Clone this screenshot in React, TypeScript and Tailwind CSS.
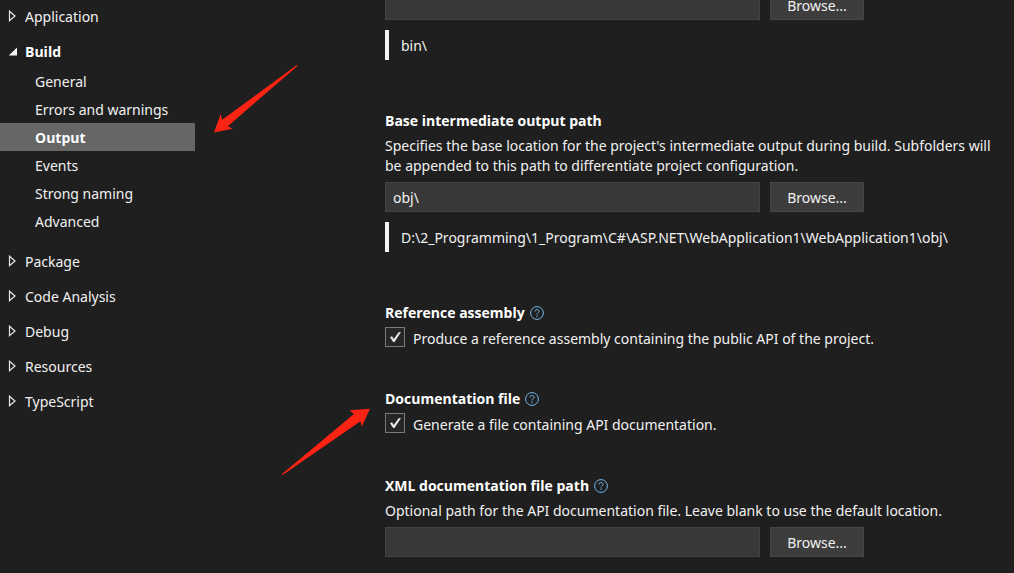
import { useId, useState } from "react";

function Expander({ open }: { open?: boolean }) {
  return (
    <svg viewBox="0 0 9 13" className="h-[13px] w-[9px] shrink-0" aria-hidden="true">
      {open ? (
        <path d="M9 2.5V10.5H0.8Z" fill="#f5f5f5" />
      ) : (
        <path d="M1.5 1.2V10.8L7 6Z" fill="none" stroke="#e8e8e8" strokeWidth="1.2" />
      )}
    </svg>
  );
}

function HelpIcon() {
  return (
    <svg viewBox="0 0 14 14" className="size-[14px] shrink-0" fill="none" stroke="#75b9ee" aria-hidden="true">
      <circle cx="7" cy="7" r="6.4" strokeWidth="1" />
      <path d="M5 5.5C5 4.2 5.8 3.5 7 3.5S9 4.2 9 5.3C9 6.7 7 6.8 7 8.5" strokeWidth="1" />
      <path d="M7 9.5V10.8" strokeWidth="1.2" />
    </svg>
  );
}

function NavGroup({ label, open }: { label: string; open?: boolean }) {
  return (
    <button
      type="button"
      aria-expanded={!!open}
      className={`flex w-full items-center gap-2 pl-2 text-left ${open ? "h-[33px] pt-[2px] font-['Open_Sans',sans-serif] font-bold text-white" : "h-[35px]"}`}
    >
      <Expander open={open} />
      {label}
    </button>
  );
}

function Heading({ children, help }: { children: string; help?: boolean }) {
  return (
    <h2 className="flex h-5 items-center gap-[5px] font-['Open_Sans',sans-serif] font-bold text-white">
      {children}
      {help && (
        <a href="#help" aria-label={`Help: ${children}`}>
          <HelpIcon />
        </a>
      )}
    </h2>
  );
}

function PathField({ label, initial }: { label: string; initial: string }) {
  const [value, setValue] = useState(initial);
  return (
    <div className="flex gap-[10px]">
      <input
        type="text"
        aria-label={label}
        value={value}
        onChange={(e) => setValue(e.target.value)}
        className="h-[30px] w-[375px] border border-[#434343] bg-[#383838] px-[7px] outline-none"
      />
      <button type="button" className="h-[30px] w-[94px] border border-[#464646] bg-[#3d3d3d] pt-[2px]">
        Browse...
      </button>
    </div>
  );
}

function ResolvedPath({ children }: { children: string }) {
  return (
    <p className="mt-[10px] flex h-[30px] items-center border-l-4 border-[#f5f5f5] pt-[2px] pl-3">{children}</p>
  );
}

function CheckOption({ label }: { label: string }) {
  const id = useId();
  const [checked, setChecked] = useState(true);
  return (
    <div className="mt-1 flex h-5 items-center gap-2">
      <span className="grid size-5 shrink-0">
        <input
          id={id}
          type="checkbox"
          checked={checked}
          onChange={(e) => setChecked(e.target.checked)}
          className="col-start-1 row-start-1 size-5 appearance-none border border-[#7a7a7a] bg-[#262626]"
        />
        {checked && (
          <svg viewBox="0 0 20 20" className="pointer-events-none col-start-1 row-start-1 size-5" aria-hidden="true">
            <path d="M5 10.2L7 9.3L8.8 11.9L13.6 5.2L16 5L9.5 15H8.2Z" fill="#e8e8e8" />
          </svg>
        )}
      </span>
      <label htmlFor={id} className="pt-[3px] leading-5">
        {label}
      </label>
    </div>
  );
}

const buildPages = ["General", "Errors and warnings", "Output", "Events", "Strong naming", "Advanced"];
const otherGroups = ["Package", "Code Analysis", "Debug", "Resources", "TypeScript"];

export default function App() {
  return (
    <div className="relative flex min-h-screen overflow-hidden bg-[#1f1f1f] font-['Noto_Sans','Open_Sans',sans-serif] text-sm leading-5 text-[#f1f1f1]">
      <nav aria-label="Project properties" className="-mt-px w-[195px] shrink-0">
        <NavGroup label="Application" />
        <NavGroup label="Build" open />
        <ul className="mb-[9px]">
          {buildPages.map((page) => (
            <li key={page}>
              <a
                href="#page"
                aria-current={page === "Output" ? "page" : undefined}
                className={`flex h-7 items-center pt-[2px] pl-[35px] ${page === "Output" ? "bg-[#666666] font-['Open_Sans',sans-serif] font-bold text-white" : ""}`}
              >
                {page}
              </a>
            </li>
          ))}
        </ul>
        {otherGroups.map((label) => (
          <NavGroup key={label} label={label} />
        ))}
      </nav>

      <main className="-mt-[10px] ml-[190px] min-w-0 flex-1 pr-3">
        <section>
          <PathField label="Base output path" initial="" />
          <ResolvedPath>bin\</ResolvedPath>
        </section>

        <section className="mt-[51px]">
          <Heading>Base intermediate output path</Heading>
          <p className="mt-[5px] mb-[6px]">
            Specifies the base location for the project's intermediate output during build. Subfolders will be
            appended to this path to differentiate project configuration.
          </p>
          <PathField label="Base intermediate output path" initial={"obj\\"} />
          <ResolvedPath>D:\2_Programming\1_Program\C#\ASP.NET\WebApplication1\WebApplication1\obj\</ResolvedPath>
        </section>

        <section className="mt-[51px]">
          <Heading help>Reference assembly</Heading>
          <CheckOption label="Produce a reference assembly containing the public API of the project." />
        </section>

        <section className="mt-[42px]">
          <Heading help>Documentation file</Heading>
          <CheckOption label="Generate a file containing API documentation." />
        </section>

        <section className="mt-[43px]">
          <Heading help>XML documentation file path</Heading>
          <p className="mt-[5px] mb-[6px]">
            Optional path for the API documentation file. Leave blank to use the default location.
          </p>
          <PathField label="XML documentation file path" initial="" />
        </section>
      </main>

      <svg viewBox="0 0 84 68" className="pointer-events-none absolute top-[65px] left-[214px] h-[68px] w-[84px]" aria-hidden="true">
        <path d="M83.5 0.5L82.5 0.2L8.2 54.8L6.7 49L0 67.5L18.5 63.7L13.8 61.3L83.5 0.9Z" fill="#ff2314" />
      </svg>
      <svg viewBox="0 0 88 67" className="pointer-events-none absolute top-[408px] left-[282px] h-[67px] w-[88px]" aria-hidden="true">
        <path d="M0 66L0.6 67L78.5 13.2L79.7 18.8L88 0.7L67.5 2.3L72 6Z" fill="#ff2314" />
      </svg>
    </div>
  );
}
